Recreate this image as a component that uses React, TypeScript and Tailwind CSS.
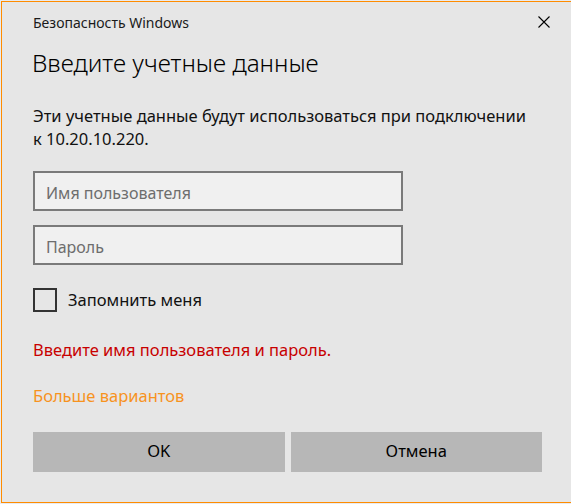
import { useState } from "react";

const font = { fontFamily: '"Segoe UI", "Noto Sans", "Liberation Sans", sans-serif' };

export default function App() {
  const [remember, setRemember] = useState(false);

  return (
    <div className="w-[571px] h-[504px] overflow-hidden bg-[#e8ebf0] pt-px pl-px" style={font}>
      <div className="w-[573px] h-[502px] border border-[#ff8c00] bg-[#e6e6e6] pl-[31px] pr-[31px] flex flex-col">
        {/* Title bar */}
        <div className="h-[40px] flex items-center justify-between">
          <span className="text-[14px] text-[#1a1a1a]">Безопасность Windows</span>
          <button className="w-[12px] h-[12px] flex items-center justify-center mr-[-8px]">
            <svg width="12" height="12" viewBox="0 0 12 12" fill="none" stroke="#000" strokeWidth="1.1">
              <path d="M0.5 0.5 L11.5 11.5 M11.5 0.5 L0.5 11.5" />
            </svg>
          </button>
        </div>

        <h1 className="mt-[5px] ml-[-1px] text-[24.3px] leading-[32px] font-light text-black">Введите учетные данные</h1>

        <p className="mt-[25px] text-[16.5px] leading-[23px] text-[#111]">
          Эти учетные данные будут использоваться при подключении
          <br />к 10.20.10.220.
        </p>

        {/* Inputs */}
        <div className="mt-[21px] flex flex-col gap-[14px] w-[370px]">
          <input
            placeholder="Имя пользователя"
            className="h-[40px] border-2 border-[#7a7a7a] bg-[#f0f0f0] px-[11px] pt-[3px] text-[16px] placeholder:text-[#6d6d6d] outline-none"
          />
          <input
            type="password"
            placeholder="Пароль"
            className="h-[40px] border-2 border-[#7a7a7a] bg-[#f0f0f0] px-[11px] pt-[3px] text-[16px] placeholder:text-[#6d6d6d] outline-none"
          />
        </div>

        {/* Remember */}
        <label className="mt-[23px] flex items-center gap-[11px] cursor-pointer">
          <span
            className="w-[24px] h-[24px] border-2 border-[#333] bg-[#e6e6e6]"
            onClick={() => setRemember(!remember)}
          />
          <span className="text-[16.5px] text-[#111]">Запомнить меня</span>
        </label>

        <p className="mt-[27px] text-[16.5px] leading-[20px] text-[#c80000]">
          Введите имя пользователя и пароль.
        </p>

        <a href="#" className="mt-[26px] text-[16.5px] leading-[20px] text-[#f7931e]">
          Больше вариантов
        </a>

        {/* Buttons */}
        <div className="mt-[26px] grid grid-cols-2 gap-[6px]">
          <button className="h-[40px] bg-[#b7b7b7] text-[16.5px] text-black">OK</button>
          <button className="h-[40px] bg-[#b7b7b7] text-[16.5px] text-black">Отмена</button>
        </div>
      </div>
    </div>
  );
}
